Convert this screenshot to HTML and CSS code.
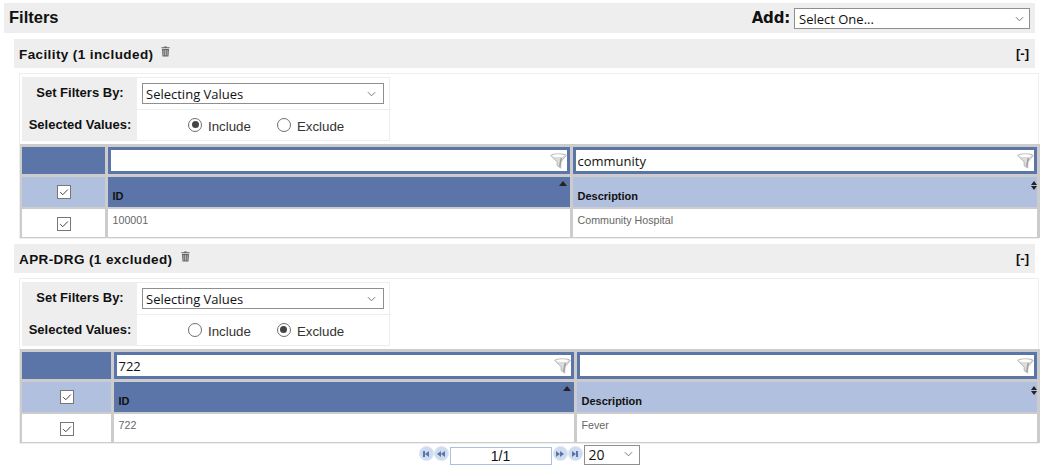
FILE: index.html
```html
<!DOCTYPE html>
<html lang="en">
<head>
<meta charset="utf-8">
<title>Filters</title>
<link rel="stylesheet" href="styles.css">
</head>
<body>
<svg class="defs" width="0" height="0" aria-hidden="true">
  <symbol id="trash" viewBox="0 0 10 12">
    <path d="M3.5 1.2V.4h3v.8H9.6v1.3H.4V1.2z" fill="#666"/>
    <path d="M1.1 3.2h7.8l-.6 8.4H1.7z" fill="#666"/>
    <path d="M3.1 4.4v6M5 4.4v6M6.9 4.4v6" stroke="#ddd" stroke-width=".7"/>
  </symbol>
  <symbol id="funnel" viewBox="0 0 18 18">
    <path d="M.8 3.8C.8 1.4 17.2 1.4 17.2 3.8L11.4 10.5V17L7.6 14.5V10.5Z" fill="#dcdcdc" stroke="#b4b4b4" stroke-width="1"/>
    <ellipse cx="8.6" cy="3.9" rx="6.4" ry="1.5" fill="#fff"/>
    <path d="M12 6.2L10.2 15.5" stroke="#a0a0a0" stroke-width="1.6"/>
  </symbol>
  <symbol id="check" viewBox="0 0 14 14">
    <rect x=".5" y=".5" width="13" height="13" fill="#fff" stroke="#777"/>
    <path d="M3.2 7.2l2.6 2.5 5-5.2" fill="none" stroke="#444" stroke-width="1"/>
  </symbol>
  <symbol id="chev" viewBox="0 0 10 6">
    <path d="M1 1l4 4 4-4" fill="none" stroke="#666" stroke-width="1"/>
  </symbol>
</svg>

<main class="page">
  <header class="bar">
    <h1 class="title">Filters</h1>
    <div class="add">
      <span class="add-label">Add:</span>
      <div class="select select-add"><span>Select One...</span><svg class="chev"><use href="#chev"/></svg></div>
    </div>
  </header>

  <section class="filter">
    <div class="filter-head">
      <h2 class="filter-name">Facility (1 included)</h2>
      <svg class="trash"><use href="#trash"/></svg>
      <span class="toggle">[-]</span>
    </div>
    <div class="filter-body">
      <div class="opts">
        <div class="opt-label">Set Filters By:</div>
        <div class="opt-value"><div class="select select-mode"><span>Selecting Values</span><svg class="chev"><use href="#chev"/></svg></div></div>
        <div class="opt-label">Selected Values:</div>
        <div class="opt-value radios">
          <span class="radio on"></span><span class="radio-text">Include</span>
          <span class="radio"></span><span class="radio-text">Exclude</span>
        </div>
      </div>
      <div class="grid grid-a">
        <div class="cell dark"></div>
        <div class="cell dark search"><div class="search-box"><span></span><svg class="funnel"><use href="#funnel"/></svg></div></div>
        <div class="cell dark search"><div class="search-box"><span>community</span><svg class="funnel"><use href="#funnel"/></svg></div></div>
        <div class="cell light head-check"><svg class="check"><use href="#check"/></svg></div>
        <div class="cell dark colhead">ID<span class="sort-up"></span></div>
        <div class="cell light colhead">Description<span class="sort-both"></span></div>
        <div class="cell row-check"><svg class="check"><use href="#check"/></svg></div>
        <div class="cell data">100001</div>
        <div class="cell data">Community Hospital</div>
      </div>
    </div>
  </section>

  <section class="filter">
    <div class="filter-head">
      <h2 class="filter-name">APR-DRG (1 excluded)</h2>
      <svg class="trash"><use href="#trash"/></svg>
      <span class="toggle">[-]</span>
    </div>
    <div class="filter-body">
      <div class="opts">
        <div class="opt-label">Set Filters By:</div>
        <div class="opt-value"><div class="select select-mode"><span>Selecting Values</span><svg class="chev"><use href="#chev"/></svg></div></div>
        <div class="opt-label">Selected Values:</div>
        <div class="opt-value radios">
          <span class="radio"></span><span class="radio-text">Include</span>
          <span class="radio on"></span><span class="radio-text">Exclude</span>
        </div>
      </div>
      <div class="grid grid-b">
        <div class="cell dark"></div>
        <div class="cell dark search"><div class="search-box"><span>722</span><svg class="funnel"><use href="#funnel"/></svg></div></div>
        <div class="cell dark search"><div class="search-box"><span></span><svg class="funnel"><use href="#funnel"/></svg></div></div>
        <div class="cell light head-check"><svg class="check"><use href="#check"/></svg></div>
        <div class="cell dark colhead">ID<span class="sort-up"></span></div>
        <div class="cell light colhead">Description<span class="sort-both"></span></div>
        <div class="cell row-check"><svg class="check"><use href="#check"/></svg></div>
        <div class="cell data">722</div>
        <div class="cell data">Fever</div>
      </div>
    </div>
    <nav class="pager">
      <span class="pg-btn"><i class="bar-l"></i><i class="tri-l"></i></span>
      <span class="pg-btn"><i class="tri-l"></i><i class="tri-l"></i></span>
      <span class="pg-input">1/1</span>
      <span class="pg-btn"><i class="tri-r"></i><i class="tri-r"></i></span>
      <span class="pg-btn"><i class="tri-r"></i><i class="bar-l"></i></span>
      <div class="select select-size"><span>20</span><svg class="chev"><use href="#chev"/></svg></div>
    </nav>
  </section>
</main>
</body>
</html>
```

FILE: styles.css
```css
* { box-sizing: border-box; }
html, body { margin: 0; padding: 0; height: 465px; overflow: hidden; background: #fff; }
body { font-family: "Liberation Sans", Arial, sans-serif; color: #111; }
.defs { display: block; height: 0; }
.page { padding: 3px 8px 0 4px; width: 1043px; }

.bar { height: 30px; background: #eee; display: flex; align-items: center; justify-content: space-between; padding: 0 5px; }
.title { margin: 0; font-size: 16.5px; font-weight: 700; position: relative; top: -1px; }
.add { display: flex; align-items: center; gap: 4px; }
.add-label { font-family: "DejaVu Sans", sans-serif; font-size: 15px; font-weight: 700; letter-spacing: -.2px; }

.select { display: flex; align-items: center; justify-content: space-between; background: #fff; border: 1px solid #8f8f8f; font-family: "Open Sans", sans-serif; color: #111; }
.chev { width: 9px; height: 6px; flex: none; }
.select-add { width: 236px; height: 21px; font-size: 13px; padding: 1px 5px 0 4px; }
.select-mode { width: 242px; height: 21px; font-size: 13px; padding: 0 7px 0 3px; }
.select-size { width: 56px; height: 20px; font-size: 14px; padding: 0 6px 2px 4px; }

.filter { margin: 6px 0 0 10px; }
.filter + .filter { margin-top: 5px; }
.filter-head { height: 29px; background: #eee; display: flex; align-items: center; padding: 0 6px 0 5px; }
.filter-name { margin: 0; font-size: 13.5px; font-weight: 700; letter-spacing: .4px; position: relative; top: .5px; }
.trash { width: 9px; height: 11px; margin: -4px 0 0 8px; }
.toggle { margin-left: auto; font-size: 13px; font-weight: 700; }

.filter-body { margin: 5px -4px 0 5px; border: 1px solid #eee; padding-top: 3px; }
.opts { display: grid; grid-template-columns: 114px 254px; grid-template-rows: 32px 31px; width: 368px; height: 64px; margin-left: 2px; border: 1px solid #eee; }
.opt-label { background: #eee; font-size: 13px; font-weight: 700; display: flex; align-items: center; justify-content: center; padding-bottom: 3px; }
.opt-value { display: flex; align-items: center; padding: 0 5px; border-bottom: 1px solid #eee; }
.radios { padding-left: 51px; font-size: 13.3px; color: #333; border-bottom: 0; }
.radio { width: 14px; height: 14px; border-radius: 50%; border: 1px solid #6f6f6f; background: #fff; flex: none; position: relative; margin-top: -2px; }
.radio.on::after { content: ""; position: absolute; inset: 2.5px; border-radius: 50%; background: #444; }
.radio-text { margin: 0 26px 0 6px; position: relative; top: 1px; }

.grid { display: grid; grid-template-rows: 27px 30px 28px; gap: 2.5px; padding: 3px 2px 1px; background: #ccc; margin-top: 3px; width: 1020px; height: 94px; }
.grid-a { grid-template-columns: 83px 462.5px 464.5px; }
.grid-b { grid-template-columns: 89px 460.5px 460.5px; }
.cell { min-width: 0; background: #fff; }
.dark { background: #5b75a8; }
.light { background: #b0c0de; }
.search { padding: 3px; }
.search-box { height: 100%; background: #fff; display: flex; align-items: center; justify-content: space-between; font-family: "Open Sans", sans-serif; font-size: 13px; padding: 0 0 0 2px; color: #111; }
.funnel { width: 17px; height: 17px; flex: none; }
.head-check, .row-check { display: flex; align-items: center; justify-content: center; }
.check { width: 14px; height: 14px; }
.row-check .check { margin-top: 2px; }
.colhead { position: relative; font-size: 11px; font-weight: 700; color: #111; padding: 13px 0 0 5px; }
.sort-up { position: absolute; top: 4px; right: 3px; border: 4px solid transparent; border-top: 0; border-bottom: 5px solid #222; }
.sort-both { position: absolute; top: 4px; right: 4px; width: 0; height: 10px; }
.sort-both::before { content: ""; position: absolute; right: -4px; top: 0; border: 3.5px solid transparent; border-top: 0; border-bottom: 4px solid #222; }
.sort-both::after { content: ""; position: absolute; right: -4px; top: 5px; border: 3.5px solid transparent; border-bottom: 0; border-top: 4px solid #222; }
.data { font-size: 10.7px; color: #666; padding: 5px 0 0 5px; }

.pager { display: flex; align-items: flex-start; justify-content: center; height: 22px; margin: 1px 0 0; padding-left: 9px; }
.pg-btn { width: 15px; height: 15px; margin-top: 1px; border-radius: 50%; background: #cfdcf0; border: 1px solid #dde6f4; display: flex; align-items: center; justify-content: center; flex: none; }
.pg-btn i { display: block; }
.tri-l { border: 3px solid transparent; border-left: 0; border-right: 4px solid #5b75a8; }
.tri-r { border: 3px solid transparent; border-right: 0; border-left: 4px solid #5b75a8; }
.bar-l { width: 2px; height: 6px; background: #5b75a8; }
.pg-input { width: 102px; height: 18px; margin: 2px 1px 0 1px; border: 1px solid #a9c0e0; font-size: 14px; text-align: center; line-height: 16px; color: #111; }
.select-size { margin-left: 1px; }
```
